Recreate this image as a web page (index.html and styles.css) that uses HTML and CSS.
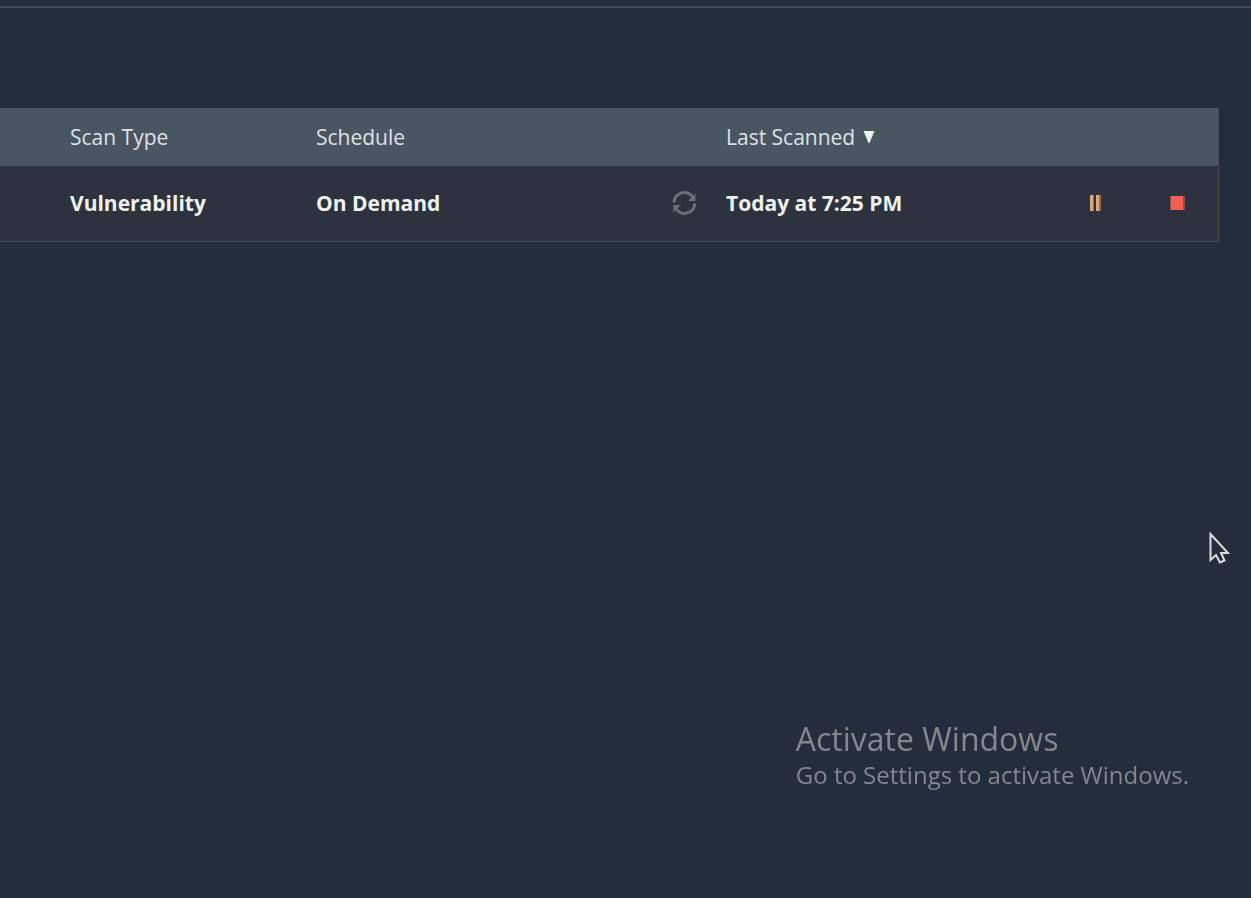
FILE: index.html
```html
<!DOCTYPE html>
<html lang="en">
<head>
  <meta charset="UTF-8" />
  <meta name="viewport" content="width=device-width, initial-scale=1.0"/>
  <title>My Scans</title>
  <link rel="stylesheet" href="styles.css">
</head>
<body>

  <header class="topbar"></header>

  <main class="content">
    <table class="scans">
      <colgroup>
        <col class="col-type">
        <col class="col-schedule">
        <col class="col-status">
        <col class="col-last">
        <col class="col-pause">
        <col class="col-stop">
      </colgroup>
      <thead>
        <tr>
          <th class="first">Scan Type</th>
          <th>Schedule</th>
          <th></th>
          <th><button class="sort">Last Scanned <svg class="arrow" viewBox="0 0 12 12"><path d="M.5 0h11L6.500 12h-1z"/></svg></button></th>
          <th></th>
          <th></th>
        </tr>
      </thead>
      <tbody>
        <tr>
          <td class="first">Vulnerability</td>
          <td>On Demand</td>
          <td>
            <svg class="running" viewBox="0 0 24 24">
              <path class="ring" d="M2 11.500A10.200 10.200 0 0 1 20.500 6M22.800 12.500A10.200 10.200 0 0 1 4.300 18"/>
              <path class="head" d="M23.500 2.500v7.500h-7.500zM1.300 21.500v-7.500h7.500z"/>
            </svg>
          </td>
          <td>Today at 7:25 PM</td>
          <td>
            <button class="pause" aria-label="Pause">
              <svg viewBox="0 0 12 16"><path class="edge" d="M1 0h4v16H1zM7 0h5v16H7z"/><path class="bar" d="M1 0h3v16H1zM7 0h3v16H7z"/></svg>
            </button>
          </td>
          <td>
            <button class="stop" aria-label="Stop">
              <svg viewBox="0 0 15 14"><path class="edge" d="M0 0h15v14H0z"/><path class="fill" d="M1 0h12v14H1z"/></svg>
            </button>
          </td>
        </tr>
      </tbody>
    </table>
  </main>

  <div class="watermark">
    <p class="watermark-title">Activate Windows</p>
    <p class="watermark-text">Go to Settings to activate Windows.</p>
  </div>

  <svg class="cursor" viewBox="0 0 22 32">
    <path d="M2.500 2v26l5.500-5 4 7.500 4.500-2-3.500-7.500h7z"/>
  </svg>

</body>
</html>
```
FILE: styles.css
```css
:root {
  --bg: #242d3b;
  --head: #4a5562;
  --row: #2d323e;
  --line: #484b54;
  --fg: #eef2ee;
  --muted: #6b7178;
}

body {
  margin: 0;
  background-color: var(--bg);
  color: var(--fg);
  font-family: 'Open Sans', 'Noto Sans', sans-serif;
  font-size: 21px;
  line-height: 28px;
}

.topbar {
  height: 6px;
  border-bottom: 2px solid var(--line);
}

.content {
  padding: 100px 32px 0 0;
}

.scans {
  width: 100%;
  table-layout: fixed;
  border-collapse: separate;
  border-spacing: 0;
}

.col-type {
  width: 316px;
}

.col-schedule {
  width: 356px;
}

.col-status {
  width: 54px;
}

.col-pause {
  width: 81px;
}

.col-stop {
  width: 49px;
}

th,
td {
  padding: 0;
  text-align: left;
  white-space: nowrap;
}

th {
  height: 58px;
  background: var(--head);
  color: #dde2e6;
  font-weight: 400;
}

td {
  height: 73px;
  padding-bottom: 2px;
  background: var(--row);
  border-bottom: 1px solid var(--line);
  font-weight: 700;
}

th:last-child,
td:last-child {
  border-right: 1px solid var(--line);
}

.first {
  padding-left: 70px;
}

button {
  display: block;
  padding: 0;
  border: none;
  background: transparent;
  color: inherit;
  font: inherit;
  cursor: pointer;
}

svg {
  display: block;
}

.sort {
  display: flex;
  align-items: center;
  gap: 8px;
}

.arrow {
  width: 12px;
  height: 12px;
  fill: var(--fg);
}

.running {
  width: 24px;
  height: 24px;
}

.ring {
  fill: none;
  stroke: var(--muted);
  stroke-width: 3;
}

.head {
  fill: var(--muted);
}

.pause svg {
  width: 12px;
  height: 16px;
}

.pause .edge {
  fill: #a0694f;
}

.pause .bar {
  fill: #d9a876;
}

.stop svg {
  width: 15px;
  height: 14px;
}

.stop .edge {
  fill: #8e5049;
}

.stop .fill {
  fill: #f25f55;
}

.watermark {
  position: fixed;
  right: 62px;
  bottom: 107px;
  color: #85878c;
}

.watermark p {
  margin: 0;
}

.watermark-title {
  font-size: 32px;
  line-height: 40px;
}

.watermark-text {
  font-size: 24px;
  line-height: 32px;
}

.cursor {
  position: fixed;
  right: 21px;
  bottom: 334px;
  width: 22px;
  height: 32px;
  fill: var(--bg);
  stroke: #dcdedd;
  stroke-width: 2;
}
```
